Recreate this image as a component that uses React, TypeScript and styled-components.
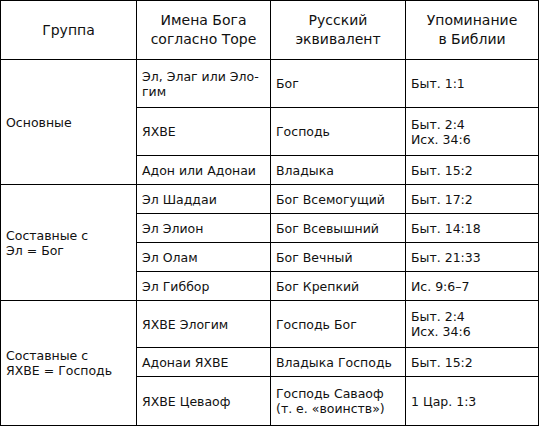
import styled, { createGlobalStyle } from 'styled-components';
import { Fragment } from 'react';

const GlobalStyle = createGlobalStyle`
  html, body {
    margin: 0;
    padding: 0;
    background: #fff;
  }
`;

const Table = styled.table`
  width: 538px;
  border-collapse: collapse;
  table-layout: fixed;
  font-family: 'DejaVu Sans', Verdana, sans-serif;
  font-size: 12.5px;
  line-height: 15px;
  color: #111;
`;

const HeadCell = styled.th`
  border: 1px solid #000;
  height: 58px;
  padding: 0 4px;
  font-weight: normal;
  font-size: 14px;
  line-height: 19px;
  text-align: center;
  vertical-align: middle;
`;

const Row = styled.tr<{ $h: number }>`
  height: ${(p) => p.$h}px;
`;

const Cell = styled.td`
  border: 1px solid #000;
  padding: 0 3px 0 5px;
  text-align: left;
  vertical-align: middle;
  white-space: nowrap;
`;

interface Name {
  name: string[];
  ru: string[];
  ref: string[];
  h: number;
}

interface Group {
  title: string[];
  names: Name[];
}

const groups: Group[] = [
  {
    title: ['Основные'],
    names: [
      { name: ['Эл, Элаг или Эло-', 'гим'], ru: ['Бог'], ref: ['Быт. 1:1'], h: 48 },
      { name: ['ЯХВЕ'], ru: ['Господь'], ref: ['Быт. 2:4', 'Исх. 34:6'], h: 48 },
      { name: ['Адон или Адонаи'], ru: ['Владыка'], ref: ['Быт. 15:2'], h: 29 },
    ],
  },
  {
    title: ['Составные с', 'Эл = Бог'],
    names: [
      { name: ['Эл Шаддаи'], ru: ['Бог Всемогущий'], ref: ['Быт. 17:2'], h: 29 },
      { name: ['Эл Элион'], ru: ['Бог Всевышний'], ref: ['Быт. 14:18'], h: 29 },
      { name: ['Эл Олам'], ru: ['Бог Вечный'], ref: ['Быт. 21:33'], h: 29 },
      { name: ['Эл Гиббор'], ru: ['Бог Крепкий'], ref: ['Ис. 9:6–7'], h: 29 },
    ],
  },
  {
    title: ['Составные с', 'ЯХВЕ = Господь'],
    names: [
      { name: ['ЯХВЕ Элогим'], ru: ['Господь Бог'], ref: ['Быт. 2:4', 'Исх. 34:6'], h: 47 },
      { name: ['Адонаи ЯХВЕ'], ru: ['Владыка Господь'], ref: ['Быт. 15:2'], h: 29 },
      { name: ['ЯХВЕ Цеваоф'], ru: ['Господь Саваоф', '(т. е. «воинств»)'], ref: ['1 Цар. 1:3'], h: 49 },
    ],
  },
];

function Lines({ lines }: { lines: string[] }) {
  return (
    <>
      {lines.map((l, i) => (
        <Fragment key={i}>
          {i > 0 && <br />}
          {l}
        </Fragment>
      ))}
    </>
  );
}

export default function App() {
  return (
    <>
      <GlobalStyle />
      <Table>
        <colgroup>
          <col style={{ width: 136 }} />
          <col style={{ width: 134 }} />
          <col style={{ width: 135 }} />
          <col style={{ width: 133 }} />
        </colgroup>
        <thead>
          <tr>
            <HeadCell>Группа</HeadCell>
            <HeadCell>
              Имена Бога
              <br />
              согласно Торе
            </HeadCell>
            <HeadCell>
              Русский
              <br />
              эквивалент
            </HeadCell>
            <HeadCell>
              Упоминание
              <br />в Библии
            </HeadCell>
          </tr>
        </thead>
        <tbody>
          {groups.map((g) =>
            g.names.map((n, i) => (
              <Row key={g.title.join() + i} $h={n.h}>
                {i === 0 && (
                  <Cell rowSpan={g.names.length}>
                    <Lines lines={g.title} />
                  </Cell>
                )}
                <Cell>
                  <Lines lines={n.name} />
                </Cell>
                <Cell>
                  <Lines lines={n.ru} />
                </Cell>
                <Cell>
                  <Lines lines={n.ref} />
                </Cell>
              </Row>
            ))
          )}
        </tbody>
      </Table>
    </>
  );
}
